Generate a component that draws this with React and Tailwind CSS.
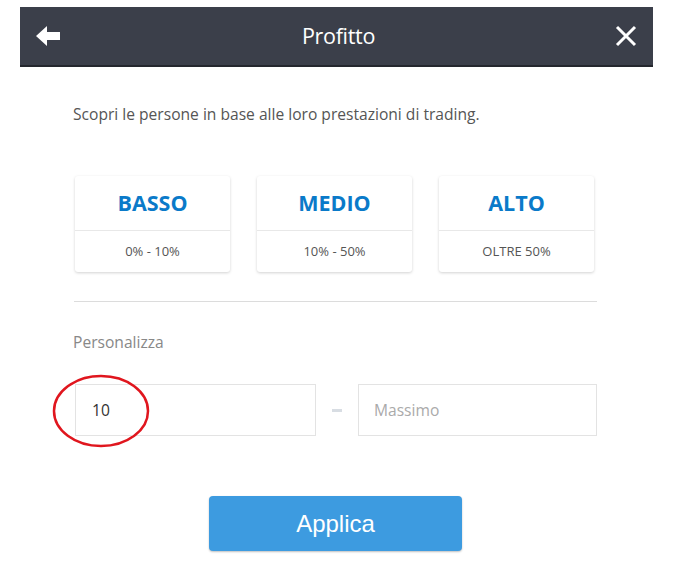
import React, { useState } from 'react';

const livelli = [
  { nome: 'BASSO', range: '0% - 10%' },
  { nome: 'MEDIO', range: '10% - 50%' },
  { nome: 'ALTO', range: 'OLTRE 50%' },
];

const App = () => {
  const [minimo, setMinimo] = useState('10');
  const [massimo, setMassimo] = useState('');

  return (
    <div className="w-[680px] h-[577px] bg-white pt-[7px]" style={{ fontFamily: '"Open Sans", "Noto Sans", sans-serif' }}>
      <div className="mx-[20px] w-[633px]">
        {/* Cabecera */}
        <div className="h-[60px] bg-[#3b3f4a] border-b-2 border-[#24272e] flex items-center justify-between px-[16px]">
          <svg width="26" height="22" viewBox="0 0 26 22">
            <path d="M0 11 L11 1 L11 7 L24 7 L24 15 L11 15 L11 21 Z" fill="#ffffff" />
          </svg>
          <span className="text-white text-[21.5px] tracking-[-0.3px]">Profitto</span>
          <svg width="22" height="22" viewBox="0 0 22 22">
            <path d="M2 2 L20 20 M20 2 L2 20" stroke="#ffffff" strokeWidth="3" />
          </svg>
        </div>

        <div className="pl-[53px] pr-[55px]">
          <p className="mt-[37px] text-[15.6px] text-[#555] leading-[20px]">
            Scopri le persone in base alle loro prestazioni di trading.
          </p>

          {/* Tarjetas */}
          <div className="mt-[52px] flex justify-between pl-[2px] pr-[4px]">
            {livelli.map((l) => (
              <div key={l.nome} className="w-[155px] h-[96px] bg-white rounded-[3px] shadow-[0_1px_3px_rgba(0,0,0,0.18)] flex flex-col">
                <div className="h-[55px] flex items-center justify-center border-b border-[#e8e8e8] text-[#0a7ac9] text-[21.5px] font-bold">
                  {l.nome}
                </div>
                <div className="flex-1 flex items-center justify-center text-[13px] text-[#555]">
                  {l.range}
                </div>
              </div>
            ))}
          </div>

          <div className="mt-[29px] mx-[1px] border-t border-[#dcdcdc]"></div>

          <div className="mt-[30px] text-[15.6px] leading-[20px] text-[#888]">Personalizza</div>

          {/* Campos */}
          <div className="mt-[32px] flex items-center">
            <div className="relative">
              <input
                value={minimo}
                onChange={(e) => setMinimo(e.target.value)}
                className="ml-[2px] w-[241px] h-[52px] border border-[#e3e3e3] px-[16px] text-[15.6px] text-[#333] outline-none"
              />
              <svg className="absolute left-[-22px] top-[-11px] pointer-events-none" width="100" height="76" viewBox="0 0 100 76">
                <ellipse cx="50" cy="38" rx="47" ry="35" fill="none" stroke="#e0161e" strokeWidth="2.5" />
              </svg>
            </div>
            <div className="w-[42px] flex justify-center">
              <div className="w-[10px] h-[3px] bg-[#d8dde3]"></div>
            </div>
            <input
              value={massimo}
              onChange={(e) => setMassimo(e.target.value)}
              placeholder="Massimo"
              className="w-[239px] h-[52px] border border-[#e3e3e3] px-[15px] text-[15.6px] text-[#333] placeholder-[#aaa] outline-none"
            />
          </div>

          <div className="mt-[60px] flex justify-center">
            <button className="w-[253px] h-[55px] bg-[#3d9be0] rounded-[4px] shadow-[0_1px_2px_rgba(0,0,0,0.25)] text-white text-[24px]" style={{ fontFamily: '"Liberation Sans", Arial, sans-serif' }}>
              Applica
            </button>
          </div>
        </div>
      </div>
    </div>
  );
};

export default App;
